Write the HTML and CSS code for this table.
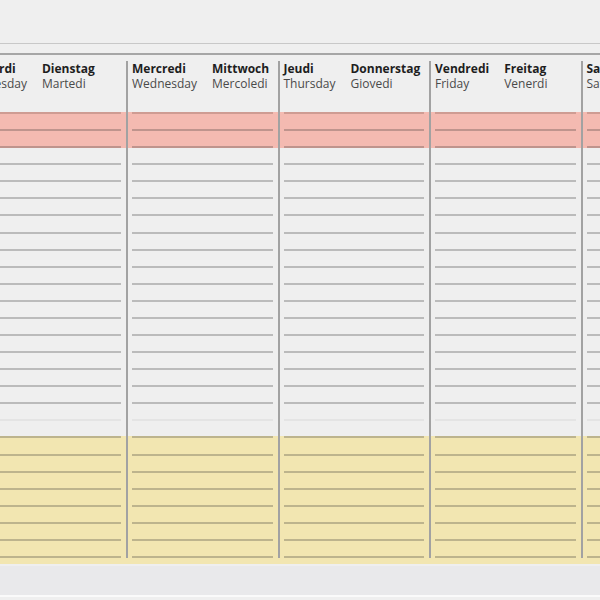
FILE: index.html
```html
<!DOCTYPE html>
<html lang="fr">
<head>
<meta charset="utf-8">
<title>Wochenplaner</title>
<link rel="stylesheet" href="styles.css">
</head>
<body>
<div class="sheet">
  <div class="rule rule-thin"></div>
  <div class="rule rule-thick"></div>
  <div class="board">
    <section class="day">
      <header class="day-head">
        <div class="names"><b>Mardi</b><span>Tuesday</span></div>
        <div class="names"><b>Dienstag</b><span>Martedi</span></div>
      </header>
      <ul class="rows">
        <li></li><li></li><li></li><li></li><li></li><li></li><li></li><li></li><li></li><li></li><li></li><li></li><li></li><li></li><li></li><li></li><li></li><li class="edge"></li><li></li><li></li><li></li><li></li><li></li><li></li><li></li><li></li>
      </ul>
    </section>
    <section class="day">
      <header class="day-head">
        <div class="names"><b>Mercredi</b><span>Wednesday</span></div>
        <div class="names"><b>Mittwoch</b><span>Mercoledi</span></div>
      </header>
      <ul class="rows">
        <li></li><li></li><li></li><li></li><li></li><li></li><li></li><li></li><li></li><li></li><li></li><li></li><li></li><li></li><li></li><li></li><li></li><li class="edge"></li><li></li><li></li><li></li><li></li><li></li><li></li><li></li><li></li>
      </ul>
    </section>
    <section class="day">
      <header class="day-head">
        <div class="names"><b>Jeudi</b><span>Thursday</span></div>
        <div class="names"><b>Donnerstag</b><span>Giovedi</span></div>
      </header>
      <ul class="rows">
        <li></li><li></li><li></li><li></li><li></li><li></li><li></li><li></li><li></li><li></li><li></li><li></li><li></li><li></li><li></li><li></li><li></li><li class="edge"></li><li></li><li></li><li></li><li></li><li></li><li></li><li></li><li></li>
      </ul>
    </section>
    <section class="day">
      <header class="day-head">
        <div class="names"><b>Vendredi</b><span>Friday</span></div>
        <div class="names"><b>Freitag</b><span>Venerdi</span></div>
      </header>
      <ul class="rows">
        <li></li><li></li><li></li><li></li><li></li><li></li><li></li><li></li><li></li><li></li><li></li><li></li><li></li><li></li><li></li><li></li><li></li><li class="edge"></li><li></li><li></li><li></li><li></li><li></li><li></li><li></li><li></li>
      </ul>
    </section>
    <section class="day">
      <header class="day-head">
        <div class="names"><b>Samedi</b><span>Saturday</span></div>
        <div class="names"><b>Samstag</b><span>Sabato</span></div>
      </header>
      <ul class="rows">
        <li></li><li></li><li></li><li></li><li></li><li></li><li></li><li></li><li></li><li></li><li></li><li></li><li></li><li></li><li></li><li></li><li></li><li class="edge"></li><li></li><li></li><li></li><li></li><li></li><li></li><li></li><li></li>
      </ul>
    </section>
  </div>
  <div class="footer"></div>
</div>
</body>
</html>
```

FILE: styles.css
```css
html, body {
  margin: 0;
  padding: 0;
  width: 600px;
  height: 600px;
  overflow: hidden;
  background: #efefef;
}

.sheet {
  padding-top: 43px;
  font-family: "Open Sans", "Noto Sans", sans-serif;
  color: #2a2a2a;
}

.rule {
  width: 100%;
}

.rule-thin {
  height: 1px;
  background: #c8c8c8;
}

.rule-thick {
  margin-top: 9px;
  height: 2px;
  background: #a6a6a6;
}

.board {
  display: flex;
  margin-left: -25.5px;
  width: 800px;
  padding-top: 6px;
  padding-bottom: 7.5px;
  background: linear-gradient(to bottom,
    transparent 0, transparent 57px,
    #f4bab1 57px, #f4bab1 93px,
    transparent 93px, transparent 381px,
    #f2e6b1 381px, #f2e6b1 509px,
    transparent 509px);
}

.day {
  flex: 0 0 151.5px;
  box-sizing: border-box;
  border-left: 2px solid #a2a2a2;
  padding: 0 5px 0 4px;
}

.day-head {
  height: 51px;
  display: flex;
  gap: 15px;
  font-size: 12px;
  line-height: 15px;
  white-space: nowrap;
}

.names {
  display: flex;
  flex-direction: column;
}

.names b {
  font-weight: 700;
  color: #1e1e1e;
}

.names span {
  font-weight: 400;
  color: #4a4a4a;
}

.rows {
  list-style: none;
  margin: 0;
  padding: 0;
  border-top: 2px solid rgba(60, 40, 30, 0.2);
}

.rows li {
  height: 15.08px;
  border-bottom: 2px solid rgba(40, 40, 40, 0.26);
}

.rows li.edge {
  border-bottom-color: rgba(40, 40, 40, 0.05);
}

.footer {
  height: 29px;
  background: #e9e9eb;
  border-bottom: 2px solid #fafafa;
}
```
